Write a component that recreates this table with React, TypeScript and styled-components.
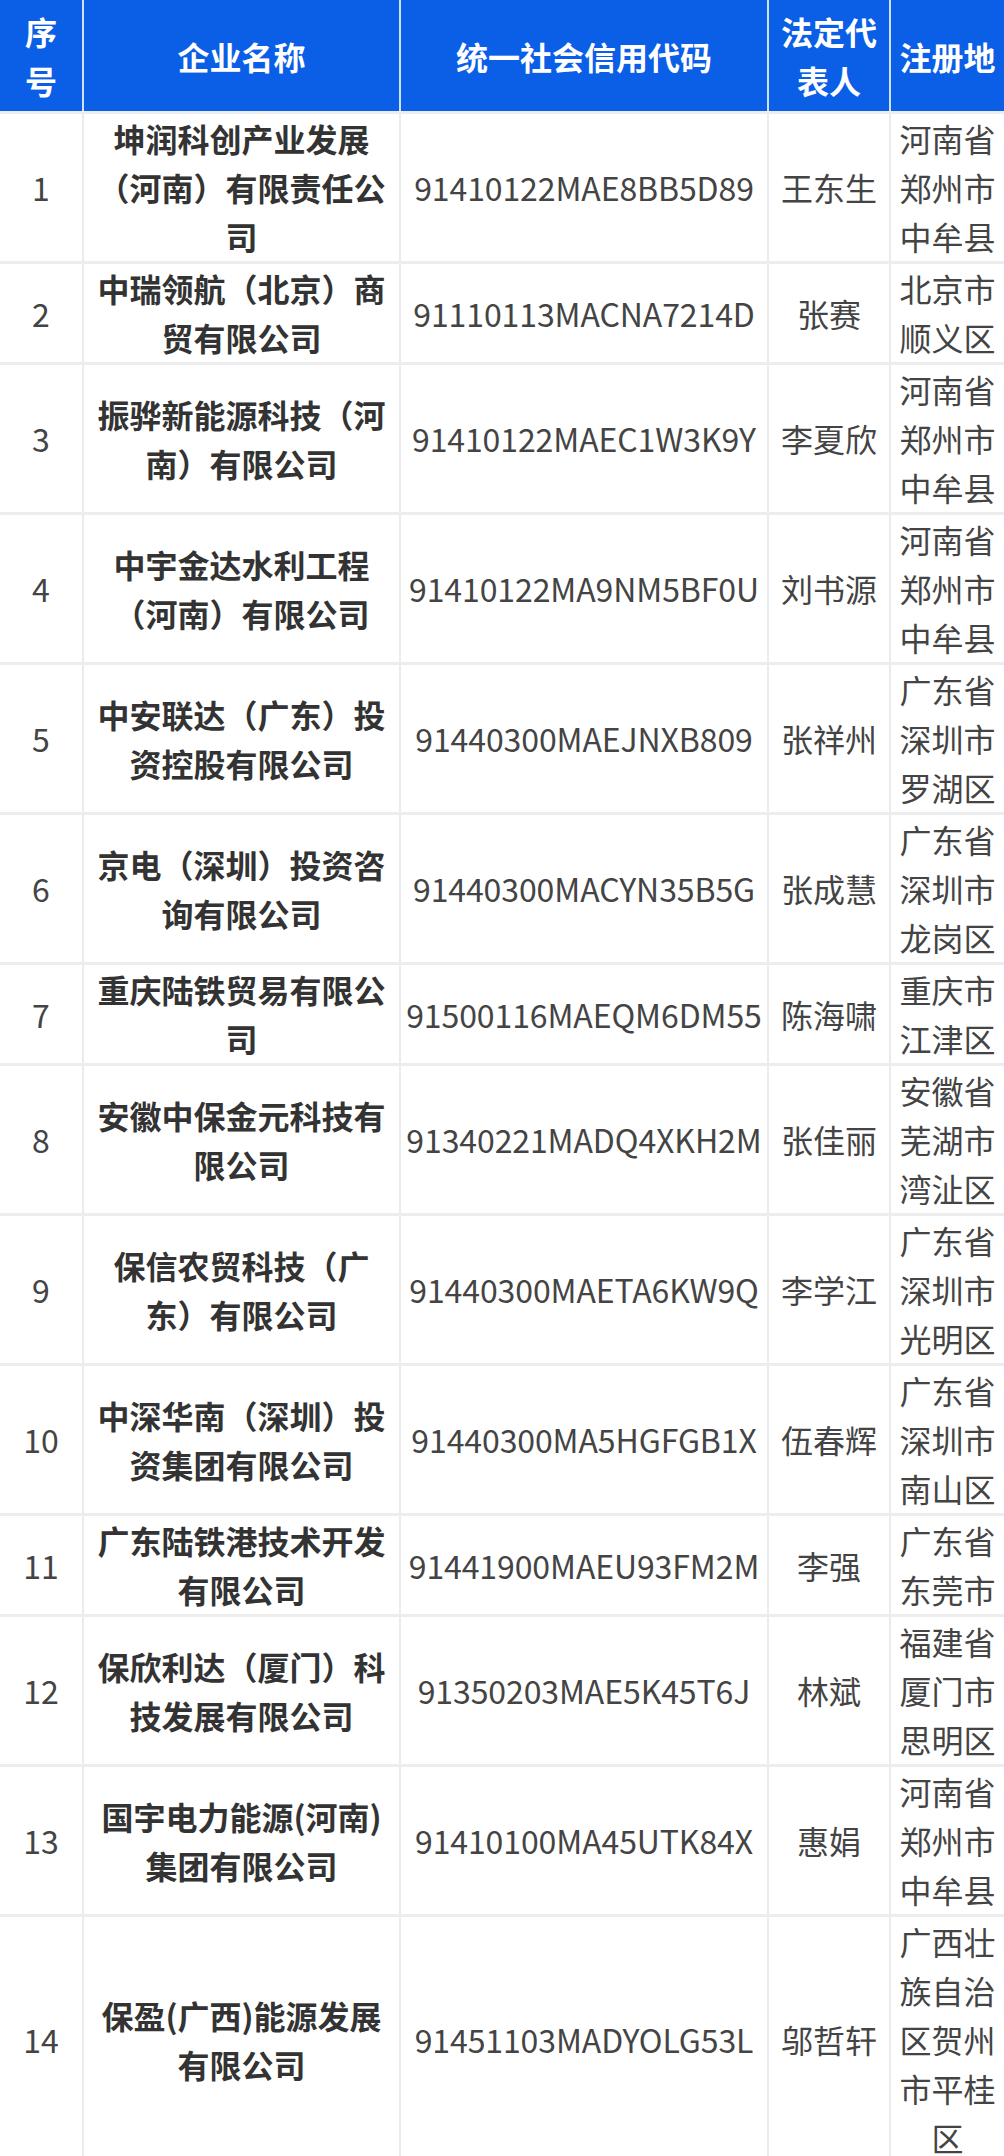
import React from 'react';
import styled, { createGlobalStyle } from 'styled-components';

const GlobalStyle = createGlobalStyle`
  html, body {
    margin: 0;
    padding: 0;
    background: #ffffff;
  }
  body {
    font-family: "Noto Sans CJK SC", "Noto Sans", sans-serif;
  }
`;

interface Company {
  name: string;
  code: string;
  rep: string;
  place: string;
}

const companies: Company[] = [
  { name: '坤润科创产业发展（河南）有限责任公司', code: '91410122MAE8BB5D89', rep: '王东生', place: '河南省郑州市中牟县' },
  { name: '中瑞领航（北京）商贸有限公司', code: '91110113MACNA7214D', rep: '张赛', place: '北京市顺义区' },
  { name: '振骅新能源科技（河南）有限公司', code: '91410122MAEC1W3K9Y', rep: '李夏欣', place: '河南省郑州市中牟县' },
  { name: '中宇金达水利工程（河南）有限公司', code: '91410122MA9NM5BF0U', rep: '刘书源', place: '河南省郑州市中牟县' },
  { name: '中安联达（广东）投资控股有限公司', code: '91440300MAEJNXB809', rep: '张祥州', place: '广东省深圳市罗湖区' },
  { name: '京电（深圳）投资咨询有限公司', code: '91440300MACYN35B5G', rep: '张成慧', place: '广东省深圳市龙岗区' },
  { name: '重庆陆铁贸易有限公司', code: '91500116MAEQM6DM55', rep: '陈海啸', place: '重庆市江津区' },
  { name: '安徽中保金元科技有限公司', code: '91340221MADQ4XKH2M', rep: '张佳丽', place: '安徽省芜湖市湾沚区' },
  { name: '保信农贸科技（广东）有限公司', code: '91440300MAETA6KW9Q', rep: '李学江', place: '广东省深圳市光明区' },
  { name: '中深华南（深圳）投资集团有限公司', code: '91440300MA5HGFGB1X', rep: '伍春辉', place: '广东省深圳市南山区' },
  { name: '广东陆铁港技术开发有限公司', code: '91441900MAEU93FM2M', rep: '李强', place: '广东省东莞市' },
  { name: '保欣利达（厦门）科技发展有限公司', code: '91350203MAE5K45T6J', rep: '林斌', place: '福建省厦门市思明区' },
  { name: '国宇电力能源(河南)集团有限公司', code: '91410100MA45UTK84X', rep: '惠娟', place: '河南省郑州市中牟县' },
  { name: '保盈(广西)能源发展有限公司', code: '91451103MADYOLG53L', rep: '邬哲轩', place: '广西壮族自治区贺州市平桂区' },
];

const Table = styled.table`
  width: 1004px;
  border-collapse: collapse;
  table-layout: fixed;
  font-size: 32px;
  line-height: 49px;
`;

const HeadCell = styled.th`
  background: #0b5ee6;
  color: #ffffff;
  font-weight: 700;
  text-align: center;
  vertical-align: middle;
  padding: 7px 8px 6px;
  border: 2px solid #cfe0fb;
  border-top: none;

  &:first-child {
    border-left: none;
  }
  &:last-child {
    border-right: none;
  }
`;

const Cell = styled.td<{ $kind?: 'num' | 'name' | 'code' | 'plain' }>`
  text-align: center;
  vertical-align: middle;
  padding: 0 ${(p) => (p.$kind === 'code' ? '0' : '8px')};
  border-left: 2px solid #ebebeb;
  border-right: 2px solid #ebebeb;
  border-top: 3px solid #ededed;
  border-bottom: 3px solid #ededed;
  color: ${(p) => (p.$kind === 'name' ? '#333333' : '#444444')};
  font-weight: ${(p) => (p.$kind === 'name' ? 700 : 400)};
  white-space: ${(p) => (p.$kind === 'code' ? 'nowrap' : 'normal')};
  letter-spacing: ${(p) => (p.$kind === 'code' ? '-0.1px' : '0')};

  &:first-child {
    border-left: none;
  }
  &:last-child {
    border-right: none;
  }
`;

export default function App() {
  return (
    <>
      <GlobalStyle />
      <Table>
        <colgroup>
          <col style={{ width: 83 }} />
          <col style={{ width: 317 }} />
          <col style={{ width: 368 }} />
          <col style={{ width: 122 }} />
          <col style={{ width: 114 }} />
        </colgroup>
        <thead>
          <tr>
            <HeadCell>
              序<br />号
            </HeadCell>
            <HeadCell>企业名称</HeadCell>
            <HeadCell>统一社会信用代码</HeadCell>
            <HeadCell>法定代表人</HeadCell>
            <HeadCell>注册地</HeadCell>
          </tr>
        </thead>
        <tbody>
          {companies.map((c, i) => (
            <tr key={c.code}>
              <Cell $kind="num">{i + 1}</Cell>
              <Cell $kind="name">{c.name}</Cell>
              <Cell $kind="code">{c.code}</Cell>
              <Cell $kind="plain">{c.rep}</Cell>
              <Cell $kind="plain">{c.place}</Cell>
            </tr>
          ))}
        </tbody>
      </Table>
    </>
  );
}
